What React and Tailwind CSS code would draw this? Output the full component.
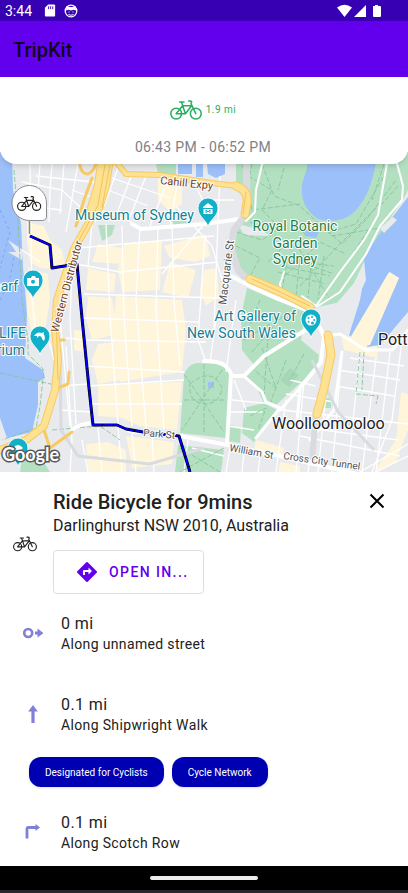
const font = "font-['Roboto','Noto_Sans',sans-serif]";

function Bike({ className }) {
  return (
    <svg viewBox="0 0 32 20" className={className} fill="none" stroke="currentColor" strokeWidth="1.5" strokeLinecap="round" strokeLinejoin="round" aria-hidden="true">
      <circle cx="6.2" cy="13.6" r="5.4" />
      <circle cx="25.8" cy="13.6" r="5.4" />
      <path d="M6.2 13.6 12.6 5.8H21.6L15.4 13.8H6.2M15.4 13.8 11.4 2M9.6 2H14M18.6 .9H20.2C21.6 .9 22.2 2.2 21.2 3L21 3.6 25.8 13.6" />
    </svg>
  );
}

function StatusBar() {
  return (
    <div className="flex h-[21px] items-center bg-[#3700b3] pl-[5px] pr-[27px] text-white">
      <span className="w-9 text-sm leading-5">3:44</span>
      <svg viewBox="0 0 12 14" className="ml-[3px] h-[13px] w-3" aria-hidden="true">
        <path fill="currentColor" d="M4 .5h6.500a1 1 0 0 1 1 1v11a1 1 0 0 1-1 1h-9a1 1 0 0 1-1-1V4z" />
        <path stroke="#3700b3" d="M4.500 2.500v3M6.700 2.500v3M9 2.500v3" />
      </svg>
      <svg viewBox="0 0 14 14" className="ml-2 h-[14px] w-[14px]" aria-hidden="true">
        <circle cx="7" cy="7" r="5.800" fill="none" stroke="currentColor" strokeWidth="1.300" />
        <path fill="currentColor" d="M2 6.500 2.500 2 5 3h4l2.500-1 .500 4.500-2.500-.800L7 6.500 4.500 5.700z" />
        <path fill="none" stroke="currentColor" d="M4.500 8h1M8.500 8h1M4.500 10.500q2.500 1.500 5 0" />
      </svg>
      <svg viewBox="0 0 44 14" className="ml-auto h-[14px] w-11" fill="currentColor" aria-hidden="true">
        <path d="M0 3.600Q7.500-2.200 15 3.600L7.500 13z" />
        <path d="M29 1v12H17z" />
        <path d="M36 2h2V1h3v1h2q1 0 1 1v9q0 1-1 1h-6q-1 0-1-1z" />
      </svg>
    </div>
  );
}

const blocks = [
  "M27 222 44 226 50 240 62 250 66 270 40 268 30 262 27 240z",
  "M28 268 48 274 50 300 45 330 34 342 27 312z",
  "M98 244 122 248 122 264 92 262z",
  "M124 244 162 240 160 290 122 292 118 270z",
  "M88 268 116 274 114 292 86 290z",
  "M88 296 112 298 118 334 92 340 86 318z",
  "M116 296 182 300 186 330 182 372 120 382 112 340z",
  "M74 330 82 330 84 352 74 350z",
  "M164 246 206 234 210 256 196 262 170 258z",
  "M170 262 196 270 188 298 162 292z",
  "M98 384 182 382 180 400 177 430 140 426 122 418 98 416z",
  "M98 344 118 342 120 380 98 384 92 360z",
  "M158 178 182 182 182 204 170 212 158 200z",
  "M204 270 217 268 219 296 206 306 200 290z",
  "M86 444 108 442 126 450 126 472 88 472z",
  "M126 436 174 442 172 464 132 468z",
  "M256 440 284 448 282 458 254 450z",
  "M340 328 377 344 378 358 360 354 344 350z",
  "M401 392 408 394V430L404 440 396 462 374 472 396 440z",
  "M280 462 300 466 300 472H278z",
];

const streets = [
  "M22 182 62 190 96 222M28 206 62 210M40 164 38 192M52 164 50 190 49 222M64 164 60 214M78 164 66 232",
  "M36 176 94 182M22 250 40 262M30 164 31 240 32 300 38 350M72 190 94 198",
  "M108 190 148 206M112 178 170 198M118 168 104 206M132 174 116 216M146 176 128 222M168 180 150 226M178 180 170 226M96 208 132 222",
  "M78 248 214 236M76 264 120 272 218 262M92 224 88 266M106 224 110 316 118 424M122 226 124 316 132 426M140 226 136 300 146 428M158 226 156 310 164 430M172 222 174 300 180 366",
  "M84 294 220 298M82 318 200 322M84 340 206 342M86 366 184 372M88 386 184 380M90 404 182 404M66 338 84 340M60 386 88 384",
  "M176 206 212 246 224 286M206 222 162 274M194 182 212 220M220 176 218 220 214 330M212 200 234 200M205 236 198 340 206 362",
  "M60 318 70 426M66 346 72 440 70 472M72 270 70 320 76 424M46 330 54 360M60 410 90 412M82 440 88 472M98 428 102 472M118 428 122 472M132 432 136 472M152 436 154 472",
  "M236 300 226 372M216 320 210 362M234 380 246 410M232 400 272 404M230 412 262 412M228 426 254 430",
  "M286 400 276 472M304 380 296 472M318 400 308 472M330 356 318 472M342 352 332 472M360 352 348 472M376 358 362 472M390 352 376 472M402 340 392 420 372 472",
  "M286 394 334 402M282 410 408 424M278 424 398 440M290 380 316 386M338 370 400 380M336 386 394 396M300 436 400 456M350 358 404 366M360 472 408 444M376 472 408 456",
  "M188 440 184 472M192 448 224 456M230 448 226 472M244 452 242 472M260 456 258 472",
];

const paths = [
  "M242 164 252 210 300 204M250 222 300 250 330 300M236 232 262 240 280 228 262 210 272 190 248 176M262 164 274 196 300 206 332 236 380 228",
  "M236 246 260 258 250 276M268 262 286 244 300 262 320 242 346 254M280 280 300 262 334 274M300 286 340 244 376 208",
  "M322 226 342 244 366 220 396 180M330 232 356 224 384 176M384 164 372 200M280 266 330 276M278 272 326 284M282 260 334 266M288 258 282 290M300 256 296 296M312 254 308 298M324 256 318 300",
  "M260 300 244 340 270 324M252 352 286 312M262 348 276 388 254 370M268 336 264 396M286 360 270 404M304 354 290 380M250 416 266 408 258 430",
  "M184 374 224 432M222 370 182 430M184 400H226M204 364V434M190 384Q212 366 222 388Q220 404 204 404Q188 402 190 384M180 448 220 472M224 448 180 472",
  "M14 170 18 220 22 300 28 340 28 354 44 370 40 406 36 428 2 440M0 373 60 386M52 430 100 426 120 440M360 352 356 394 378 396 376 404M364 352 362 390",
  "M252 164 246 194 250 208M284 168 278 190M296 220 306 236M398 186 382 204M376 218 350 258",
];

const label = "fill-current stroke-white [paint-order:stroke] [stroke-linejoin:round]";

function PoiPin({ x, y, children }) {
  return (
    <g transform={`translate(${x} ${y})`}>
      <path d="M0 18C-1 11-10 8-10-1A10 10 0 0 1 10-1C10 8 1 11 0 18z" fill="#12b0c8" stroke="#fff" strokeWidth=".8" />
      {children}
    </g>
  );
}

function TripMap() {
  return (
    <svg viewBox="0 152 408 320" className="-mt-3 block w-full font-['Roboto','Noto_Sans',sans-serif]" role="img" aria-label="Map of the bicycle route">
      <rect y="152" width="408" height="320" fill="#e8eaed" />
      <g fill="#fef5da">{blocks.map((d) => <path key={d} d={d} />)}</g>
      <g fill="#b4e0c2">
        <path d="M236 152H408V190L404 198 381 232 372 248 364 262 354 283 337 303 313 308 240 274 231 262 231 230 240 220 248 206 236 184z" />
        <path d="M247 288 305 312 301 340 319 355 317 368 276 405 264 403 257 388 244 375 254 365 242 350 241 316z" />
        <path d="M244 408 264 403 277 410 254 442 242 433zM228 424 241 428 240 443 228 441z" />
        <path d="M184 376Q186 365 197 363L218 364Q230 368 231 376L226 438 180 433zM178 445 224 450 221 472H175z" />
        <path d="M98 225 115 225 112 235 102 241zM171 221 189 221 188 227 171 227zM154 152H176V175H158zM324 398H331V408H323z" />
        <path d="M22 460 40 456 50 472H20z" />
      </g>
      <path fill="#a5d6b5" d="M280 380 290 368 299 375 289 387z" />
      <g fill="#9cc0f9">
        <path d="M0 152H12L13 190 21 223 23 267 27 314 25 358 43 370 45 378 38 382 38 405 32 432 7 438 0 418z" />
        <path d="M307 152V168L302 184Q299 206 318 219 346 226 360 205 372 190 378 152z" />
        <path d="M408 197 381 232 372 245 364 260 366 280 357 300 349 336 356 338 390 272 399 278 370 332 367 347 380 345 408 312z" />
        <path d="M178 152H192V174H178zM196 152H203V177H196zM207 164H225V174L216 178 208 174zM304 227 320 230 316 238 306 236zM208 382H214V388H208z" />
      </g>
      <path fill="#fef5da" d="M389 272 399 278 370 345 355 348 350 338z" />
      <path fill="#e8eaed" d="M380 228 393 217 397 220 384 233zM337 303 364 276 360 300 348 338 330 326 316 308zM8 240 23 250 22 260 8 252 16 252zM238 224 262 230 270 236 244 235z" />
      <path stroke="#7ba7ee" strokeDasharray="3 3" fill="none" d="M0 210 10 232 0 268M0 300Q12 280 14 255" />
      <g fill="none" stroke="#fff" strokeWidth="1.300">{streets.map((d) => <path key={d} d={d} />)}</g>
      <g fill="none" stroke="#86c59b" strokeWidth=".9" strokeDasharray="5 2">{paths.map((d) => <path key={d} d={d} />)}</g>
      <g fill="none" stroke="#fff" strokeLinecap="round" strokeLinejoin="round">
        <path strokeWidth="4" d="M132 224 141 229 204 224 240 219M72 430Q82 422 94 424L117 425 130 431 180 436 228 445 284 457 408 486" />
        <path strokeWidth="4" d="M231 276 250 286 278 299 312 312 324 336 321 362 300 388M204 361Q226 360 231 374L227 444M231 376H244L264 356 312 326" />
        <path strokeWidth="3" d="M244 376 262 392 266 402 280 408 256 438M300 388 280 410M300 390 296 430M326 336 340 334 366 350 392 350 408 330M342 352 334 410 310 440" />
        <path strokeWidth="2" d="M389 152 378 215 364 240 340 272 316 306M394 152 403 186 402 200 380 226 366 254 340 292 318 306M265 152 256 190 255 212 246 221M316 306 302 296M282 296 280 284 284 272" />
      </g>
      <g fill="none" stroke="#d9dbde">
        <path strokeWidth="7" d="M246 152 247 196M243 218 234 230 231 248 238 270 246 278" />
        <path strokeWidth="3" d="M60 350 61 430 78 456 150 464 204 448M312 360 338 412 374 450" />
        <path strokeWidth="6" d="M316 412 312 460" />
      </g>
      <g fill="none" strokeLinecap="round" strokeLinejoin="round">
        <g stroke="#f8ca62">
          <path strokeWidth="16" d="M107 152 102 185 95 208" />
          <path strokeWidth="8" d="M95 212 74 249 57 300 55 330 58 360 55 390 44 426 26 440 0 450" />
          <path strokeWidth="6" d="M113 158 126 174 160 175 212 183 236 186" />
          <path strokeWidth="9" d="M236 186Q248 190 247 202L245 214M250 279 281 292 310 307M328 335 331 355 324 388 317 414" />
          <path strokeWidth="3" d="M79 152Q78 174 88 174 96 170 96 160M92 178 84 200 76 226M57 340 64 340M58 388 68 384 69 372M44 430 50 448 72 432" />
        </g>
        <g stroke="#fde293">
          <path strokeWidth="14" d="M107 152 102 185 95 208" />
          <path strokeWidth="6" d="M95 212 74 249 57 300 55 330 58 360 55 390 44 426 26 440 0 450" />
          <path strokeWidth="4" d="M113 158 126 174 160 175 212 183 236 186" />
          <path strokeWidth="7" d="M236 186Q248 190 247 202L245 214M250 279 281 292 310 307M328 335 331 355 324 388 317 414" />
        </g>
        <path stroke="#f5b945" strokeWidth=".8" d="M105 165 98 205 78 242M110 165 102 208M246 192 243 214M252 279 310 306M56 310 58 380" />
      </g>
      <g fill="none" strokeLinejoin="round">
        <path stroke="#000" strokeWidth="3" d="M30 236 50 245 52 268 77 264 82 318 89 388 93 425 117 425 126 429 143 432 179 436 190 472" />
        <path stroke="#0000f5" strokeWidth="2" strokeDasharray="10 1" d="M30 236 50 245 52 268 77 264 82 318 89 388 93 425 117 425 126 429 143 432 179 436 190 472" />
      </g>
      <g strokeWidth="2">
        <g className="text-[#703d17]" fontSize="11">
          <text className={label} transform="translate(160 184) rotate(6)">Cahill Expy</text>
          <text className={label} transform="translate(58 333) rotate(-75)">Western Distributor</text>
        </g>
        <g className="text-[#4c5158]" fontSize="11">
          <text className={label} transform="translate(226 305) rotate(-83)">Macquarie St</text>
          <text className={label} fontSize="10" transform="translate(143 436) rotate(5)">Park St</text>
          <text className={label} fontSize="10" transform="translate(229 451) rotate(10)">William St</text>
          <text className={label} fontSize="10" transform="translate(283 459) rotate(8)">Cross City Tunnel</text>
        </g>
        <g className="text-[#128091]" fontSize="14">
          <text className={label} x="75" y="220">Museum of Sydney</text>
          <text className={label} x="296" y="321" textAnchor="end">Art Gallery of</text>
          <text className={label} x="296" y="338" textAnchor="end">New South Wales</text>
          <text className={label} x="18" y="291" textAnchor="end">Wharf</text>
          <text className={label} x="26" y="338" textAnchor="end">SEA LIFE</text>
          <text className={label} x="25" y="355" textAnchor="end">Aquarium</text>
        </g>
        <g className="text-[#1d8048]" fontSize="14" textAnchor="middle">
          <text className={label} x="295" y="231">Royal Botanic</text>
          <text className={label} x="295" y="248">Garden</text>
          <text className={label} x="295" y="264">Sydney</text>
        </g>
        <g className="text-[#202124]" fontSize="16">
          <text className={label} x="272" y="429">Woolloomooloo</text>
          <text className={label} x="378" y="345">Potts Point</text>
        </g>
      </g>
      <PoiPin x={208} y={209}>
        <path fill="#fff" d="M-5-2 0-6 5-2V-1H-5zM-4.500 0H4.500V5H-4.500z" />
        <path fill="none" stroke="#12b0c8" d="M-2 4V1L0 3 2 1V4" />
      </PoiPin>
      <PoiPin x={33} y={281}>
        <path fill="#fff" d="M-6-3H-2L-1-5H2L3-3H6V5H-6z" />
        <circle cy=".8" r="2" fill="#12b0c8" />
      </PoiPin>
      <PoiPin x={40} y={337}>
        <path fill="#fff" d="M-6-1Q-3-6 2-4L4-5 3.500-3Q6 0 4 4L2 2Q2-1-1-1L-3 1-3-1z" />
      </PoiPin>
      <PoiPin x={311} y={320}>
        <circle r="5.500" fill="#fff" />
        <g fill="#12b0c8"><circle cx="-2.500" cy="-2" r="1" /><circle cx="1" cy="-3" r="1" /><circle cx="3.200" cy="0" r="1" /><circle cx="-2.500" cy="1.800" r="1" /><circle cx="1.500" cy="3" r="1.500" /></g>
      </PoiPin>
      <PoiPin x={18} y={449}>
        <path fill="#fff" d="M-5-1Q0-7 5-1L3 1H-3z" />
      </PoiPin>
      <text x="2" y="461" fontSize="18" className="fill-white stroke-[#55585c] font-['Lato','Noto_Sans',sans-serif] font-bold [paint-order:stroke]" strokeWidth="3">Google</text>
      <path stroke="#8a8a8a" strokeWidth="1.500" d="M29.500 218V234" />
      <path fill="#fff" stroke="#8b8f94" d="M29.500 185.500A17.500 17.500 0 0 1 46.500 203V216Q46.500 220.500 42 220.500H29.500A17.500 17.500 0 0 1 29.500 185.500z" />
      <g transform="translate(17 196) scale(.76)" fill="none" stroke="#222" strokeWidth="1.500" strokeLinecap="round" strokeLinejoin="round">
        <circle cx="6.200" cy="13.600" r="5.400" />
        <circle cx="25.800" cy="13.600" r="5.400" />
        <path d="M6.200 13.600 12.600 5.800H21.600L15.400 13.800H6.200M15.400 13.800 11.400 2M9.600 2H14M18.600 .9H20.200C21.600 .9 22.200 2.200 21.200 3L21 3.600 25.800 13.600" />
      </g>
    </svg>
  );
}

function DepartIcon() {
  return (
    <svg viewBox="0 0 20 20" className="h-5 w-5" aria-hidden="true">
      <circle cx="5.200" cy="9" r="4" fill="none" stroke="currentColor" strokeWidth="2.600" />
      <path fill="currentColor" d="M12 7.500h2.500V4.500L20.500 9l-6 4.500v-3H12z" />
    </svg>
  );
}

function StraightIcon() {
  return (
    <svg viewBox="0 0 20 20" className="h-5 w-5" aria-hidden="true">
      <path fill="currentColor" d="M10 0l4.800 6.500h-3.200V18H8.400V6.500H5.200z" />
    </svg>
  );
}

function RightIcon() {
  return (
    <svg viewBox="0 0 20 20" className="h-5 w-5" aria-hidden="true">
      <path fill="none" stroke="currentColor" strokeWidth="2.800" d="M4 15.500V6Q4 4.500 5.500 4.500H13" />
      <path fill="currentColor" d="M12.500 1l4.500 3.500-4.500 3.500z" />
    </svg>
  );
}

function Step({ icon, distance, street, children }) {
  return (
    <li className="pb-[10px]">
      <div className="flex items-center pl-[23px]">
        <span className="w-[38px] text-[#8080d8]">{icon}</span>
        <div>
          <p className="text-base leading-5 tracking-wide">{distance}</p>
          <p className="text-sm leading-5 tracking-wide">{street}</p>
        </div>
      </div>
      {children}
    </li>
  );
}

function Chip({ children }) {
  return (
    <span className="flex h-[30px] items-center rounded-xl bg-[#0000b3] px-4 text-[10px] text-white shadow">{children}</span>
  );
}

export default function App() {
  return (
    <div className={`flex min-h-screen flex-col bg-white text-[#212121] ${font}`}>
      <StatusBar />
      <header className="flex h-14 items-center bg-[#6200ee] px-[13px] pt-[2px]">
        <h1 className="text-xl font-medium text-[#120720]">TripKit</h1>
      </header>
      <section className="relative z-10 flex h-[87px] flex-col items-center rounded-b-2xl bg-white pt-[23px] pr-[2px] shadow-md">
        <div className="flex items-center gap-1 text-[#27ae60]">
          <Bike className="h-5 w-8" />
          <span className="text-[10px] leading-5 tracking-wider">1.9 mi</span>
        </div>
        <p className="mt-[17px] text-sm leading-5 tracking-wide text-[#7d8188]">06:43 PM - 06:52 PM</p>
      </section>
      <TripMap />
      <main className="grow">
        <div className="flex pt-[18px]">
          <div className="flex w-[53px] items-center pl-[13px] pt-1">
            <Bike className="h-4 w-6" />
          </div>
          <div className="grow">
            <h2 className="text-xl leading-6 font-medium">Ride Bicycle for 9mins</h2>
            <p className="text-base leading-6">Darlinghurst NSW 2010, Australia</p>
            <button type="button" className="mt-3 flex h-11 items-center gap-3 rounded border border-[#dedede] pl-[23px] pr-[15px] text-sm font-medium tracking-widest text-[#6200ee]">
              <svg viewBox="0 0 20 20" className="h-5 w-5" aria-hidden="true">
                <path fill="currentColor" d="M9.300.300q.700-.600 1.400 0l9 9q.600.700 0 1.400l-9 9q-.700.600-1.400 0l-9-9q-.600-.700 0-1.400z" />
                <path fill="#fff" d="M6 13V9q0-1 1-1h4.500V5.500L15 9l-3.500 3.500V10H8v3z" />
              </svg>
              OPEN IN...
            </button>
          </div>
          <button type="button" aria-label="Close" className="mr-[23px] mt-[3px] h-4 w-4 text-black">
            <svg viewBox="0 0 16 16" className="h-4 w-4" fill="none" stroke="currentColor" strokeWidth="2">
              <path d="M1.500 1.500l13 13M14.500 1.500l-13 13" />
            </svg>
          </button>
        </div>
        <ol className="pt-5">
          <Step icon={<DepartIcon />} distance="0 mi" street="Along unnamed street">
            <div className="h-[31px]" />
          </Step>
          <Step icon={<StraightIcon />} distance="0.1 mi" street="Along Shipwright Walk">
            <div className="mt-[22px] mb-4 flex gap-2 pl-[29px]">
              <Chip>Designated for Cyclists</Chip>
              <Chip>Cycle Network</Chip>
            </div>
          </Step>
          <Step icon={<RightIcon />} distance="0.1 mi" street="Along Scotch Row" />
        </ol>
      </main>
      <footer className="flex h-[27px] items-center justify-center border-b-[3px] border-[#26262b] bg-black">
        <div className="h-1 w-[108px] rounded-full bg-[#ececec]" />
      </footer>
    </div>
  );
}
